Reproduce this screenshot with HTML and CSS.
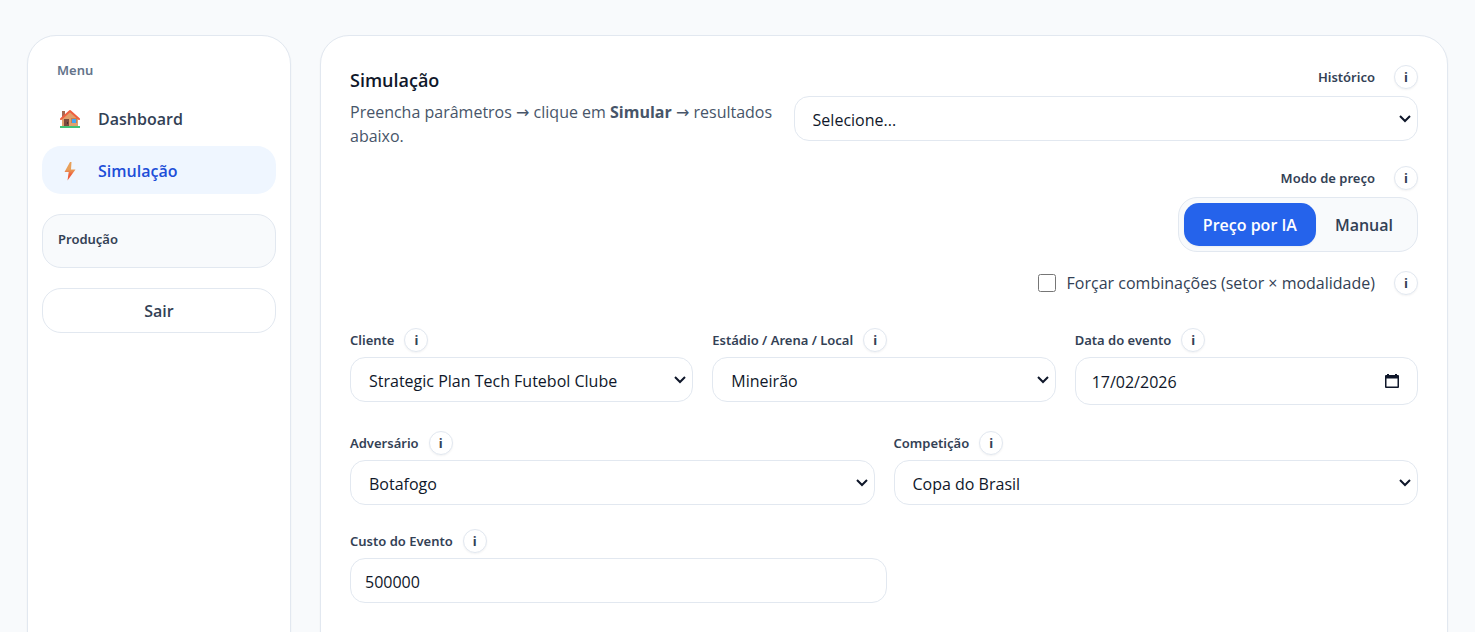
FILE: index.html
```
<!DOCTYPE html>
<html lang="pt-BR">
<head>
    <meta charset="UTF-8">
    <meta name="viewport" content="width=device-width, initial-scale=1.0">
    <title>Simulação</title>
    <link rel="stylesheet" href="styles.css">
</head>
<body>
    <div class="layout">
        <aside class="card sidebar">
            <div class="menu-title">Menu</div>
            <nav class="menu">
                <a href="#dashboard" class="menu-item">
                    <svg class="menu-icon" viewBox="0 0 20 20" aria-hidden="true">
                        <path fill="#a56953" d="M2 2h3v6H2z"/>
                        <path fill="#e0a06c" d="M2 9l8-7 8 7v9H2z"/>
                        <path fill="#7d4b3e" d="M4 10h5v8H4z"/>
                        <path fill="#4a2f2c" d="M7 13h1v2H7z"/>
                        <path fill="#c8804f" d="M11 9h6v5h-6z"/>
                        <path fill="#43a5f5" d="M12 10h4v4h-4z"/>
                        <path fill="none" stroke="#ef6040" stroke-width="2" stroke-linecap="round" stroke-linejoin="round" d="M1 10l9-8 9 8"/>
                        <path fill="#43c276" d="M0 17h20v2H0z"/>
                    </svg>
                    Dashboard
                </a>
                <a href="#simulacao" class="menu-item active">
                    <svg class="menu-icon" viewBox="0 0 20 20" aria-hidden="true">
                        <defs>
                            <linearGradient id="bolt" x1="0" y1="0" x2="0" y2="1">
                                <stop offset="0.4" stop-color="#e8a05a"/>
                                <stop offset="0.7" stop-color="#ee5d3b"/>
                            </linearGradient>
                        </defs>
                        <path fill="url(#bolt)" d="M10 1L4.500 11h4.200L7.500 19.500 15.500 8.500h-4.500L11.500 1z"/>
                    </svg>
                    Simulação
                </a>
            </nav>
            <div class="env">Produção</div>
            <button type="button" class="logout">Sair</button>
        </aside>

        <main class="card content">
            <header class="top">
                <div class="intro">
                    <h1>Simulação</h1>
                    <p>Preencha parâmetros <span class="arrow">→</span> clique em <strong>Simular</strong> <span class="arrow">→</span> resultados abaixo.</p>
                </div>
                <div class="options">
                    <div class="option">
                        <div class="label-row wide">
                            <label for="historico">Histórico</label>
                            <button type="button" class="info" aria-label="Sobre o histórico">i</button>
                        </div>
                        <select id="historico">
                            <option>Selecione...</option>
                        </select>
                    </div>
                    <div class="option">
                        <div class="label-row wide">
                            <span class="label">Modo de preço</span>
                            <button type="button" class="info" aria-label="Sobre o modo de preço">i</button>
                        </div>
                        <div class="toggle">
                            <button type="button" class="selected">Preço por IA</button>
                            <button type="button">Manual</button>
                        </div>
                    </div>
                    <div class="force-row">
                        <input type="checkbox" id="forcar">
                        <label for="forcar">Forçar combinações (setor × modalidade)</label>
                        <button type="button" class="info" aria-label="Sobre as combinações">i</button>
                    </div>
                </div>
            </header>

            <form>
                <div class="row three">
                    <div class="field">
                        <div class="label-row">
                            <label for="cliente">Cliente</label>
                            <button type="button" class="info" aria-label="Sobre o cliente">i</button>
                        </div>
                        <select id="cliente">
                            <option>Strategic Plan Tech Futebol Clube</option>
                        </select>
                    </div>
                    <div class="field">
                        <div class="label-row">
                            <label for="estadio">Estádio / Arena / Local</label>
                            <button type="button" class="info" aria-label="Sobre o local">i</button>
                        </div>
                        <select id="estadio">
                            <option>Mineirão</option>
                        </select>
                    </div>
                    <div class="field">
                        <div class="label-row">
                            <label for="data">Data do evento</label>
                            <button type="button" class="info" aria-label="Sobre a data">i</button>
                        </div>
                        <div class="date-box">
                            <input type="text" id="data" value="17/02/2026">
                            <button type="button" class="calendar" aria-label="Abrir calendário">
                                <svg viewBox="0 0 16 16" aria-hidden="true">
                                    <path fill="#0f172a" fill-rule="evenodd" d="M3 1h2v1h6V1h2v1h1q1 0 1 1v11q0 1-1 1H2q-1 0-1-1V3q0-1 1-1h1zM2.500 5.500v8h11v-8z"/>
                                </svg>
                            </button>
                        </div>
                    </div>
                </div>
                <div class="row two">
                    <div class="field">
                        <div class="label-row">
                            <label for="adversario">Adversário</label>
                            <button type="button" class="info" aria-label="Sobre o adversário">i</button>
                        </div>
                        <select id="adversario">
                            <option>Botafogo</option>
                        </select>
                    </div>
                    <div class="field">
                        <div class="label-row">
                            <label for="competicao">Competição</label>
                            <button type="button" class="info" aria-label="Sobre a competição">i</button>
                        </div>
                        <select id="competicao">
                            <option>Copa do Brasil</option>
                        </select>
                    </div>
                </div>
                <div class="field cost">
                    <div class="label-row">
                        <label for="custo">Custo do Evento</label>
                        <button type="button" class="info" aria-label="Sobre o custo">i</button>
                    </div>
                    <input type="text" inputmode="numeric" id="custo" value="500000">
                </div>
            </form>
        </main>
    </div>
</body>
</html>
```
FILE: styles.css
```
* {
    box-sizing: border-box;
}
body {
    margin: 0;
    background: #f8fafc;
    color: #0f172a;
    font-family: "Segoe UI", "Open Sans", "Noto Sans", sans-serif;
    font-size: 16px;
    line-height: 24px;
}
button, input, select {
    font: inherit;
    color: inherit;
}
button {
    cursor: pointer;
}
.layout {
    display: grid;
    grid-template-columns: 264px 1fr;
    gap: 29px;
    padding: 35px 27px;
}
.card {
    min-height: 100vh;
    background: #fff;
    border: 1px solid #e2e8f0;
    border-radius: 29px;
    box-shadow: 0 1px 2px rgba(15, 23, 42, 0.05);
}

/* sidebar */
.sidebar {
    padding: 22px 14px;
}
.menu-title, .env, .label-row {
    font-family: "Segoe UI", "Noto Sans", sans-serif;
    font-size: 13px;
    font-weight: 600;
}
.menu-title {
    padding: 0 15px;
    margin-bottom: 12px;
    color: #64748b;
}
.menu {
    display: flex;
    flex-direction: column;
    gap: 4px;
    margin-bottom: 20px;
}
.menu-item {
    display: flex;
    align-items: center;
    gap: 18px;
    height: 48px;
    padding: 2px 18px 0;
    border-radius: 19px;
    color: #334155;
    font-weight: 600;
    text-decoration: none;
}
.menu-item.active {
    background: #eff6ff;
    color: #1d4ed8;
}
.menu-icon {
    width: 20px;
    height: 20px;
}
.env {
    height: 54px;
    padding: 12px 15px;
    margin-bottom: 20px;
    background: #f8fafc;
    border: 1px solid #e2e8f0;
    border-radius: 19px;
    color: #334155;
}
.logout {
    width: 100%;
    height: 45px;
    background: #fff;
    border: 1px solid #e2e8f0;
    border-radius: 19px;
    color: #334155;
    font-weight: 600;
}

/* content */
.content {
    padding: 29px;
}
.top {
    display: grid;
    grid-template-columns: 17fr 25fr;
    gap: 19px;
    margin-bottom: 33px;
}
h1 {
    margin: 3px 0 8px;
    font-size: 18px;
    font-weight: 600;
    line-height: 24px;
}
.intro p {
    margin: 0;
    color: #475569;
}
.arrow {
    font-family: "DejaVu Sans", sans-serif;
    line-height: 1;
}
.options {
    display: flex;
    flex-direction: column;
}
.option {
    display: flex;
    flex-direction: column;
    align-items: flex-end;
    margin-bottom: 25px;
}
.option + .option {
    margin-bottom: 19px;
}
.label-row {
    display: flex;
    align-items: center;
    gap: 10px;
    margin-bottom: 5px;
    color: #334155;
}
.label-row.wide {
    gap: 19px;
    margin-bottom: 7px;
}
.info {
    width: 24px;
    height: 24px;
    padding: 0;
    background: #fff;
    border: 1px solid #e2e8f0;
    border-radius: 50%;
    box-shadow: 0 1px 2px rgba(15, 23, 42, 0.05);
    color: #334155;
    font-size: 13px;
    font-weight: 700;
    line-height: 20px;
}
select, input[type="text"] {
    display: block;
    width: 100%;
    height: 45px;
    padding: 2px 14px 0;
    background-color: #fff;
    border: 1px solid #e2e8f0;
    border-radius: 15px;
}
select {
    appearance: none;
    padding: 2px 32px 0 18px;
    background-image: url("data:image/svg+xml,%3Csvg xmlns='http://www.w3.org/2000/svg' width='12' height='8' viewBox='0 0 12 8'%3E%3Cpath d='M1 1l5 5 5-5' fill='none' stroke='%230f172a' stroke-width='2'/%3E%3C/svg%3E");
    background-repeat: no-repeat;
    background-position: right 6px center;
}
.toggle {
    display: flex;
    padding: 5px;
    background: #f8fafc;
    border: 1px solid #e2e8f0;
    border-radius: 19px;
}
.toggle button {
    height: 43px;
    padding: 0 19px;
    background: none;
    border: none;
    border-radius: 15px;
    color: #334155;
    font-weight: 600;
}
.toggle .selected {
    background: #2563eb;
    box-shadow: 0 1px 2px rgba(15, 23, 42, 0.05);
    color: #fff;
}
.force-row {
    display: flex;
    align-items: center;
    justify-content: flex-end;
    color: #334155;
}
.force-row input {
    width: 18px;
    height: 18px;
    margin: 0 11px 0 0;
}
.force-row .info {
    margin-left: 19px;
}

/* form */
.row {
    display: grid;
    gap: 19px;
}
.three {
    grid-template-columns: repeat(3, 1fr);
    margin-bottom: 26px;
}
.two {
    grid-template-columns: repeat(2, 1fr);
    margin-bottom: 24px;
}
.cost {
    max-width: 537px;
}
.date-box {
    display: flex;
    align-items: center;
    height: 48px;
    padding: 0 17px 0 16px;
    border: 1px solid #e2e8f0;
    border-radius: 15px;
}
.date-box input[type="text"] {
    flex: 1;
    min-width: 0;
    height: 26px;
    padding: 2px 0 0;
    border: none;
    border-radius: 0;
}
.calendar {
    width: 16px;
    height: 16px;
    padding: 0;
    background: none;
    border: none;
}
.calendar svg {
    display: block;
}
```
